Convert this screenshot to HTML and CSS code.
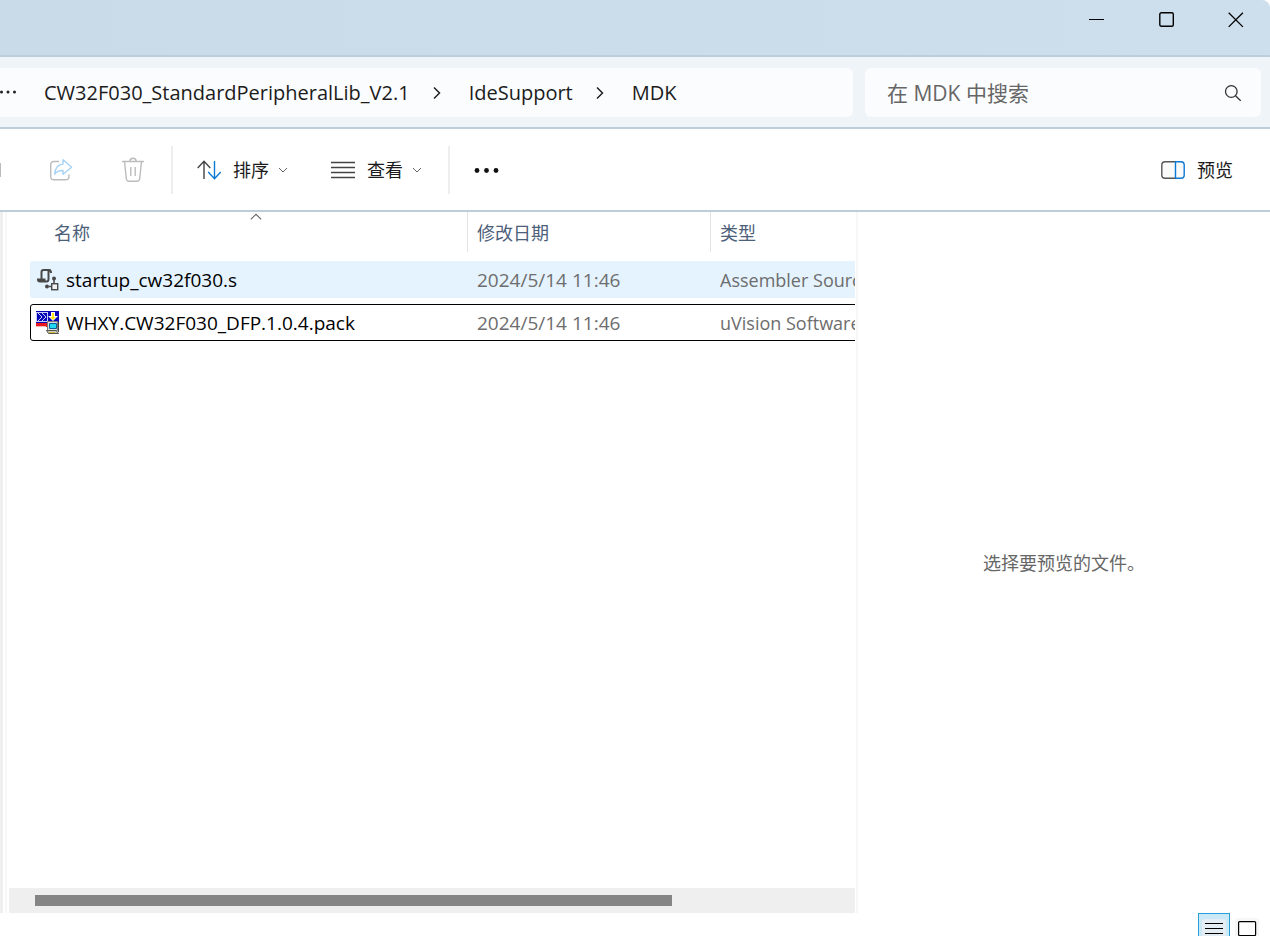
FILE: index.html
```html
<!DOCTYPE html>
<html lang="zh-CN">
<head>
<meta charset="utf-8">
<title>MDK</title>
<link rel="stylesheet" href="styles.css">
</head>
<body>
<header class="titlebar">
  <button class="win-btn" aria-label="最小化"><svg width="16" height="16" viewBox="0 0 16 16"><path d="M0 7.5H15" stroke="#000"/></svg></button>
  <button class="win-btn" aria-label="最大化"><svg width="16" height="16" viewBox="0 0 16 16"><rect x=".8" y=".8" width="13.5" height="13.5" rx="1.5" fill="none" stroke="#000" stroke-width="1.4"/></svg></button>
  <button class="win-btn" aria-label="关闭"><svg width="16" height="16" viewBox="0 0 16 16"><path d="M.7.7 14.9 14.9M14.9.7.7 14.9" stroke="#000" stroke-width="1.3"/></svg></button>
</header>

<div class="address-row">
  <nav class="breadcrumbs" aria-label="路径">
    <button class="crumb-more" aria-label="更多"><svg width="18" height="6" viewBox="0 0 18 6" fill="#222"><circle cx="1.500" cy="2" r="1.500"/><circle cx="8" cy="2" r="1.500"/><circle cx="14.500" cy="2" r="1.500"/></svg></button>
    <a class="crumb" href="#">CW32F030_StandardPeripheralLib_V2.1</a>
    <svg class="crumb-arrow" width="8" height="14" viewBox="0 0 8 14"><path d="M1 1.500 6.500 7 1 12.500"/></svg>
    <a class="crumb" href="#">IdeSupport</a>
    <svg class="crumb-arrow" width="8" height="14" viewBox="0 0 8 14"><path d="M1 1.500 6.500 7 1 12.500"/></svg>
    <a class="crumb" href="#">MDK</a>
  </nav>
  <form class="search">
    <input class="search-input" type="text" aria-label="搜索" placeholder="在 MDK 中搜索">
    <button class="search-btn" type="button" aria-label="搜索"><svg width="18" height="18" viewBox="0 0 18 18" fill="none" stroke="#333" stroke-width="1.3"><circle cx="7.300" cy="7.500" r="5.800"/><path d="m11.500 11.800 5.200 5"/></svg></button>
  </form>
</div>

<div class="toolbar">
  <span class="cut-icon"></span>
  <button class="tool share" aria-label="共享"><svg width="24" height="24" viewBox="0 0 24 24" fill="none" stroke-width="1.400" stroke-linejoin="round" stroke-linecap="round"><path d="M9.500 3.500H5Q1.700 3.500 1.700 6.800V18.500Q1.700 21.800 5 21.800H16.500Q20 21.800 20 18.500V17" stroke="#bcbcbc"/><path d="M14 1.800 22.600 9.300 14 16.300V12.500Q8.500 12.300 5.700 16 6.500 6.700 14 6Z" stroke="#a9d3f5"/></svg></button>
  <button class="tool trash" aria-label="删除"><svg width="24" height="26" viewBox="0 0 24 26" fill="none" stroke="#bcbcbc" stroke-width="1.400" stroke-linecap="round"><path d="M1.500 4.500H22.500M8.700 4.500Q9 1.200 12 1.200T15.300 4.500M3.500 4.500 5.300 21.500Q5.600 24.300 8 24.300H16Q18.400 24.300 18.700 21.500L20.500 4.500M9.800 10.500V18.500M14.200 10.500V18.500"/></svg></button>
  <span class="divider"></span>
  <button class="tool sort"><svg width="24" height="20" viewBox="0 0 24 20" fill="none" stroke-width="1.400"><path d="M7 19V1.500M.7 8 7 1.300 13.300 8" stroke="#444"/><path d="M17.500 1V18.500M11.200 12 17.500 18.700 23.700 12" stroke="#0a78d4"/></svg><span>排序</span><svg class="chev" width="10" height="6" viewBox="0 0 10 6"><path d="M1 1 5 5 9 1"/></svg></button>
  <button class="tool view"><svg width="24" height="18" viewBox="0 0 24 18"><path d="M0 1.500H24M0 6.500H24M0 11.500H24M0 16.500H24" stroke="#444" stroke-width="1.300"/></svg><span>查看</span><svg class="chev" width="10" height="6" viewBox="0 0 10 6"><path d="M1 1 5 5 9 1"/></svg></button>
  <span class="divider"></span>
  <button class="tool more" aria-label="查看更多"><svg width="26" height="6" viewBox="0 0 26 6" fill="#111"><circle cx="3" cy="3.500" r="2.400"/><circle cx="12.500" cy="3.500" r="2.400"/><circle cx="22" cy="3.500" r="2.400"/></svg></button>
  <button class="tool preview-btn"><svg width="24" height="18" viewBox="0 0 24 18" fill="#fafafa" stroke-width="1.400"><path d="M14.500.8H4Q.8.800.8 4V14Q.8 17.200 4 17.200H14.500" stroke="#555"/><path d="M14.500.8H20Q23.200.8 23.200 4V14Q23.200 17.200 20 17.200H14.500Z" stroke="#0a78d4"/></svg><span>预览</span></button>
</div>

<main class="content">
  <div class="nav-edge"></div>
  <section class="list-pane">
    <div class="list-view">
      <svg class="sort-mark" width="12" height="7" viewBox="0 0 12 7"><path d="M.8 6.300 6 1.300 11.200 6.300" fill="none" stroke="#666" stroke-width="1.100"/></svg>
      <table class="files">
        <thead><tr><th>名称</th><th>修改日期</th><th>类型</th></tr></thead>
        <tbody>
          <tr class="hovered">
            <td class="name"><svg width="24" height="24" viewBox="0 0 24 24" fill="none" stroke="#484848" stroke-width="2"><path d="M5.500 12V4Q5.500 2 7.500 2H14.500M12.500 2V11Q12.500 13.500 10.500 13.500H4Q2 13.500 2 11.500H8.500V13M12.500 2Q15 2 15 5" /><path d="M18 11V16M13 18.500H16" stroke-width="1.500"/><circle cx="18" cy="10.500" r="2" fill="#484848" stroke="none"/><circle cx="11" cy="18.500" r="2" fill="#484848" stroke="none"/><rect x="15.700" y="15.700" width="6" height="6" fill="#f1f1f1" stroke-width="1.400"/></svg><span>startup_cw32f030.s</span></td>
            <td class="date">2024/5/14 11:46</td><td>Assembler Source</td>
          </tr>
          <tr class="focused">
            <td class="name"><svg width="24" height="24" viewBox="0 0 24 24"><path fill="#0707b8" d="M0 0H23V12H0Z"/><path fill="#e8151d" d="M0 12H11V16H0Z"/><path fill="#f5b5b5" d="M0 15H10V16H0Z"/><path d="M.5 1V11M2 2 6 6 2 10M6 2 10 6 6 10M1 1.500H11M1 10.500H11M11.500 1V11" stroke="#dfe3ff" stroke-width=".9" fill="none"/><path fill="#fff" d="M15 1H19V5H22L17 10 12 5H15Z"/><path fill="#ffe51e" d="M16 2H18V6H20L17 9 14 6H16Z"/><path fill="#ddd" stroke="#777" d="M11.500 10.500H21.500V19.500H11.500Z"/><path fill="#20d8f2" stroke="#07609c" d="M13.500 12.500H20.500V17.500H13.500Z"/><path fill="#c9c8bc" stroke="#55554d" d="M10.500 19.500H20L22.500 22.500H12.500Z"/><path d="M22.500 11V21" stroke="#444"/><path d="M13 21.500H19" stroke="#d5bd38"/></svg><span>WHXY.CW32F030_DFP.1.0.4.pack</span></td>
            <td class="date">2024/5/14 11:46</td><td>uVision Software Pack</td>
          </tr>
        </tbody>
      </table>
    </div>
    <div class="scroll-track"><div class="scroll-thumb"></div></div>
  </section>
  <aside class="preview-pane"><p>选择要预览的文件。</p></aside>
</main>

<footer class="statusbar">
  <button class="mode mode-active" aria-label="详细信息"><svg width="24" height="24" viewBox="0 0 24 24"><rect width="24" height="24" rx="3" fill="#e5edf4"/><path d="M3 4.500H21M3 9.500H21M3 14.500H21" stroke="#000"/></svg></button>
  <button class="mode" aria-label="大图标"><svg width="24" height="24" viewBox="0 0 24 24"><rect width="24" height="24" rx="3" fill="#f7f7f7"/><rect x="3.600" y="3.600" width="17" height="14" rx="1" fill="#fff" stroke="#000" stroke-width="1.200"/></svg></button>
</footer>
</body>
</html>
```

FILE: styles.css
```css
* { box-sizing: border-box; }

body {
  margin: 0;
  height: 100vh;
  display: flex;
  flex-direction: column;
  overflow: hidden;
  background: #fff;
  color: #1b1b1b;
  font: 18px/24px "Open Sans", "Noto Sans CJK SC", sans-serif;
}

button {
  display: flex;
  align-items: center;
  justify-content: center;
  padding: 0;
  border: 0;
  background: none;
  color: inherit;
  font: inherit;
}

svg { display: block; flex: none; }

.titlebar {
  display: flex;
  justify-content: flex-end;
  flex: none;
  height: 57px;
  border-bottom: 2px solid #bccddc;
  border-top-right-radius: 8px;
  background: linear-gradient(90deg, #c9dbe8, #cddeed);
}
.win-btn { width: 70px; height: 40px; }
.win-btn:last-child { width: 68px; }

.address-row {
  display: flex;
  flex: none;
  gap: 12px;
  height: 72px;
  padding: 11px 9px 10px 0;
  border-bottom: 2px solid #bccddc;
  background: #eff4f9;
}
.breadcrumbs {
  display: flex;
  align-items: center;
  flex: 1;
  padding-top: 1px;
  border-radius: 0 6px 6px 0;
  background: #fbfcfe;
  font-size: 20px;
}
.crumb { color: #1b1b1b; text-decoration: none; }
.crumb-more { width: 44px; justify-content: flex-start; }
.crumb-arrow {
  margin: 0 28px 0 23px;
  fill: none;
  stroke: #222;
  stroke-width: 1.5;
}
.search {
  display: flex;
  width: 396px;
  border-radius: 6px;
  background: #fbfcfe;
}
.search-input {
  flex: 1;
  min-width: 0;
  padding: 0 0 0 22px;
  border: 0;
  outline: 0;
  background: none;
  font: inherit;
  font-size: 21px;
}
.search-input::placeholder { color: #666; opacity: 1; }
.search-btn { width: 56px; }

.toolbar {
  display: flex;
  align-items: center;
  flex: none;
  height: 83px;
  border-bottom: 2px solid #bccddc;
}
.cut-icon { width: 1px; height: 14px; background: #bbb; }
.share { margin-left: 48px; }
.trash { margin-left: 48px; }
.divider { width: 2px; height: 48px; margin-left: 26px; background: #eee; }
.sort, .view, .preview-btn { gap: 12px; }
.sort { margin-left: 24px; }
.view { margin-left: 43px; }
.chev { margin-left: -3px; fill: none; stroke: #666; }
.more { margin-left: 24px; }
.preview-btn { margin: 0 37px 0 auto; }

.content { display: flex; flex: 1; min-height: 0; }
.nav-edge {
  width: 7px;
  border-left: 3px solid #efefef;
  border-right: 2px solid #f7f7f7;
}
.list-pane {
  display: flex;
  flex-direction: column;
  flex: 1;
  min-width: 0;
  padding: 0 1px 0 2px;
}
.list-view { position: relative; flex: 1; overflow: hidden; }
.sort-mark { position: absolute; top: 1px; left: 241px; }

.files { display: block; margin-left: 21px; }
.files thead, .files tbody { display: block; }
.files tr {
  display: grid;
  grid-template-columns: 438px 243px 300px;
  width: 981px;
}
.files th {
  height: 40px;
  padding: 9px 9px 0;
  border-right: 1px solid #e3e3e3;
  color: #4c607a;
  font-weight: 400;
  text-align: left;
}
.files th:first-child { padding-left: 24px; }
.files tbody { padding-top: 9px; }
.files tbody tr {
  align-items: center;
  height: 37px;
  margin-bottom: 6px;
  border: 1px solid transparent;
  border-radius: 3px;
}
.files td { padding: 0 8px; color: #6d6d6d; white-space: nowrap; }
.files .name { display: flex; gap: 6px; padding: 0 5px; color: #000; }
.files .name, .files .date { font-size: 19px; }
.files .hovered { background: #e5f3ff; }
.files .focused { border-color: #000; }

.scroll-track { height: 25px; padding: 7px 0 0 26px; background: #efefef; }
.scroll-thumb { width: 637px; max-width: 78%; height: 11px; background: #858585; }

.preview-pane {
  display: flex;
  align-items: center;
  justify-content: center;
  width: 414px;
  border-left: 2px solid #f7f7f7;
  color: #666;
}
.preview-pane p { margin: 0; }

.statusbar {
  display: flex;
  justify-content: flex-end;
  flex: none;
  gap: 1px;
  height: 23px;
  padding-right: 7px;
  overflow: hidden;
}
.mode { width: 32px; height: 32px; padding-top: 5px; align-items: flex-start; }
.mode-active { border: 1px solid #26a0da; background: #cbe8f6; }
```
